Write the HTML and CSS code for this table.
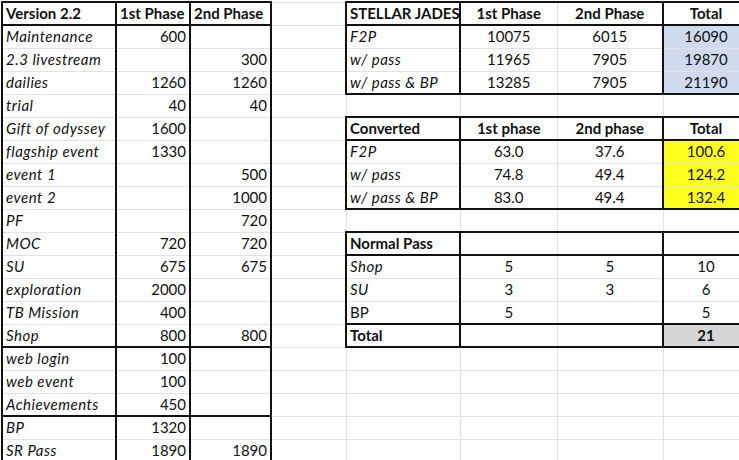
FILE: index.html
```html
<!DOCTYPE html>
<html>
<head>
<meta charset="utf-8">
<link rel="stylesheet" href="styles.css">
</head>
<body>
<table class="sheet">
  <colgroup>
    <col class="ca"><col class="cb"><col class="cc"><col class="cd"><col class="ce"><col class="cf"><col class="cg"><col class="ch">
  </colgroup>
  <tr>
    <td class="L bt bb b">Version 2.2</td><td class="L bt bb b">1st Phase</td><td class="L bt bb b">2nd Phase</td><td></td>
    <td class="E bt bb b">STELLAR JADES</td><td class="bt bb b c">1st Phase</td><td class="G bt bb b c">2nd Phase</td><td class="H bt bb b c">Total</td>
  </tr>
  <tr>
    <td class="L i">Maintenance</td><td class="L n">600</td><td class="L n"></td><td></td>
    <td class="E i">F2P</td><td class="c">10075</td><td class="G c">6015</td><td class="H c blue">16090</td>
  </tr>
  <tr>
    <td class="L i">2.3 livestream</td><td class="L n"></td><td class="L n">300</td><td></td>
    <td class="E i">w/ pass</td><td class="c">11965</td><td class="G c">7905</td><td class="H c blue">19870</td>
  </tr>
  <tr>
    <td class="L i">dailies</td><td class="L n">1260</td><td class="L n">1260</td><td></td>
    <td class="E i bb">w/ pass &amp; BP</td><td class="c bb">13285</td><td class="G c bb">7905</td><td class="H c bb blue">21190</td>
  </tr>
  <tr>
    <td class="L i">trial</td><td class="L n">40</td><td class="L n">40</td><td></td>
    <td></td><td></td><td></td><td></td>
  </tr>
  <tr>
    <td class="L i">Gift of odyssey</td><td class="L n">1600</td><td class="L n"></td><td></td>
    <td class="E bt bb b">Converted</td><td class="bt bb b c">1st phase</td><td class="G bt bb b c">2nd phase</td><td class="H bt bb b c">Total</td>
  </tr>
  <tr>
    <td class="L i">flagship event</td><td class="L n">1330</td><td class="L n"></td><td></td>
    <td class="E i">F2P</td><td class="c">63.0</td><td class="G c">37.6</td><td class="H c yellow">100.6</td>
  </tr>
  <tr>
    <td class="L i">event 1</td><td class="L n"></td><td class="L n">500</td><td></td>
    <td class="E i">w/ pass</td><td class="c">74.8</td><td class="G c">49.4</td><td class="H c yellow">124.2</td>
  </tr>
  <tr>
    <td class="L i">event 2</td><td class="L n"></td><td class="L n">1000</td><td></td>
    <td class="E i bb">w/ pass &amp; BP</td><td class="c bb">83.0</td><td class="G c bb">49.4</td><td class="H c bb yellow">132.4</td>
  </tr>
  <tr>
    <td class="L i">PF</td><td class="L n"></td><td class="L n">720</td><td></td>
    <td></td><td></td><td></td><td></td>
  </tr>
  <tr>
    <td class="L i">MOC</td><td class="L n">720</td><td class="L n">720</td><td></td>
    <td class="E bt bb b">Normal Pass</td><td class="bt bb"></td><td class="G bt bb"></td><td class="H bt bb"></td>
  </tr>
  <tr>
    <td class="L i">SU</td><td class="L n">675</td><td class="L n">675</td><td></td>
    <td class="E i">Shop</td><td class="c">5</td><td class="G c">5</td><td class="H c">10</td>
  </tr>
  <tr>
    <td class="L i">exploration</td><td class="L n">2000</td><td class="L n"></td><td></td>
    <td class="E i">SU</td><td class="c">3</td><td class="G c">3</td><td class="H c">6</td>
  </tr>
  <tr>
    <td class="L i">TB Mission</td><td class="L n">400</td><td class="L n"></td><td></td>
    <td class="E bb">BP</td><td class="c bb">5</td><td class="G c bb"></td><td class="H c bb">5</td>
  </tr>
  <tr>
    <td class="L i bb">Shop</td><td class="L n bb">800</td><td class="L n bb">800</td><td></td>
    <td class="E bb b">Total</td><td class="bb"></td><td class="G bb"></td><td class="H c bb b gray">21</td>
  </tr>
  <tr>
    <td class="L i">web login</td><td class="L n">100</td><td class="L n"></td><td></td>
    <td></td><td></td><td></td><td></td>
  </tr>
  <tr>
    <td class="L i">web event</td><td class="L n">100</td><td class="L n"></td><td></td>
    <td></td><td></td><td></td><td></td>
  </tr>
  <tr>
    <td class="L i bb">Achievements</td><td class="L n bb">450</td><td class="L n bb"></td><td></td>
    <td></td><td></td><td></td><td></td>
  </tr>
  <tr>
    <td class="L i">BP</td><td class="L n">1320</td><td class="L n"></td><td></td>
    <td></td><td></td><td></td><td></td>
  </tr>
  <tr>
    <td class="L i bb">SR Pass</td><td class="L n bb">1890</td><td class="L n bb">1890</td><td></td>
    <td></td><td></td><td></td><td></td>
  </tr>
</table>
</body>
</html>
```
FILE: styles.css
```css
html, body {
  margin: 0;
  padding: 0;
  background: #ffffff;
  overflow: hidden;
}

.sheet {
  border-collapse: collapse;
  table-layout: fixed;
  width: 748px;
  margin: 1px 0 0 1px;
  font-family: Lato, "Liberation Sans", sans-serif;
  font-size: 15px;
  color: #111;
}

.ca { width: 114px; }
.cb { width: 74px; }
.cc { width: 81px; }
.cd { width: 75px; }
.ce { width: 114px; }
.cf { width: 97px; }
.cg { width: 106px; }
.ch { width: 86px; }

.sheet tr { height: 23px; }

.sheet td {
  border: 1px solid #e2e2e2;
  padding: 0 3px;
  line-height: 17px;
  white-space: nowrap;
  overflow: hidden;
  vertical-align: middle;
}

.sheet td.L { border-left: 2px solid #111; border-right: 2px solid #111; }
.sheet td.E { border-left: 2px solid #111; border-right: 2px solid #111; }
.sheet td.G { border-right: 2px solid #111; }
.sheet td.H { border-right: 2px solid #111; }
.sheet td.bt { border-top: 2px solid #111; }
.sheet td.bb { border-bottom: 2px solid #111; }

.b { font-weight: 700; }
.i { font-style: italic; letter-spacing: 0.5px; }
.n { text-align: right; }
.c { text-align: center; }

.blue { background: #cfdaee; }
.yellow { background: #ffff1e; }
.gray { background: #d6d6d6; }
```
